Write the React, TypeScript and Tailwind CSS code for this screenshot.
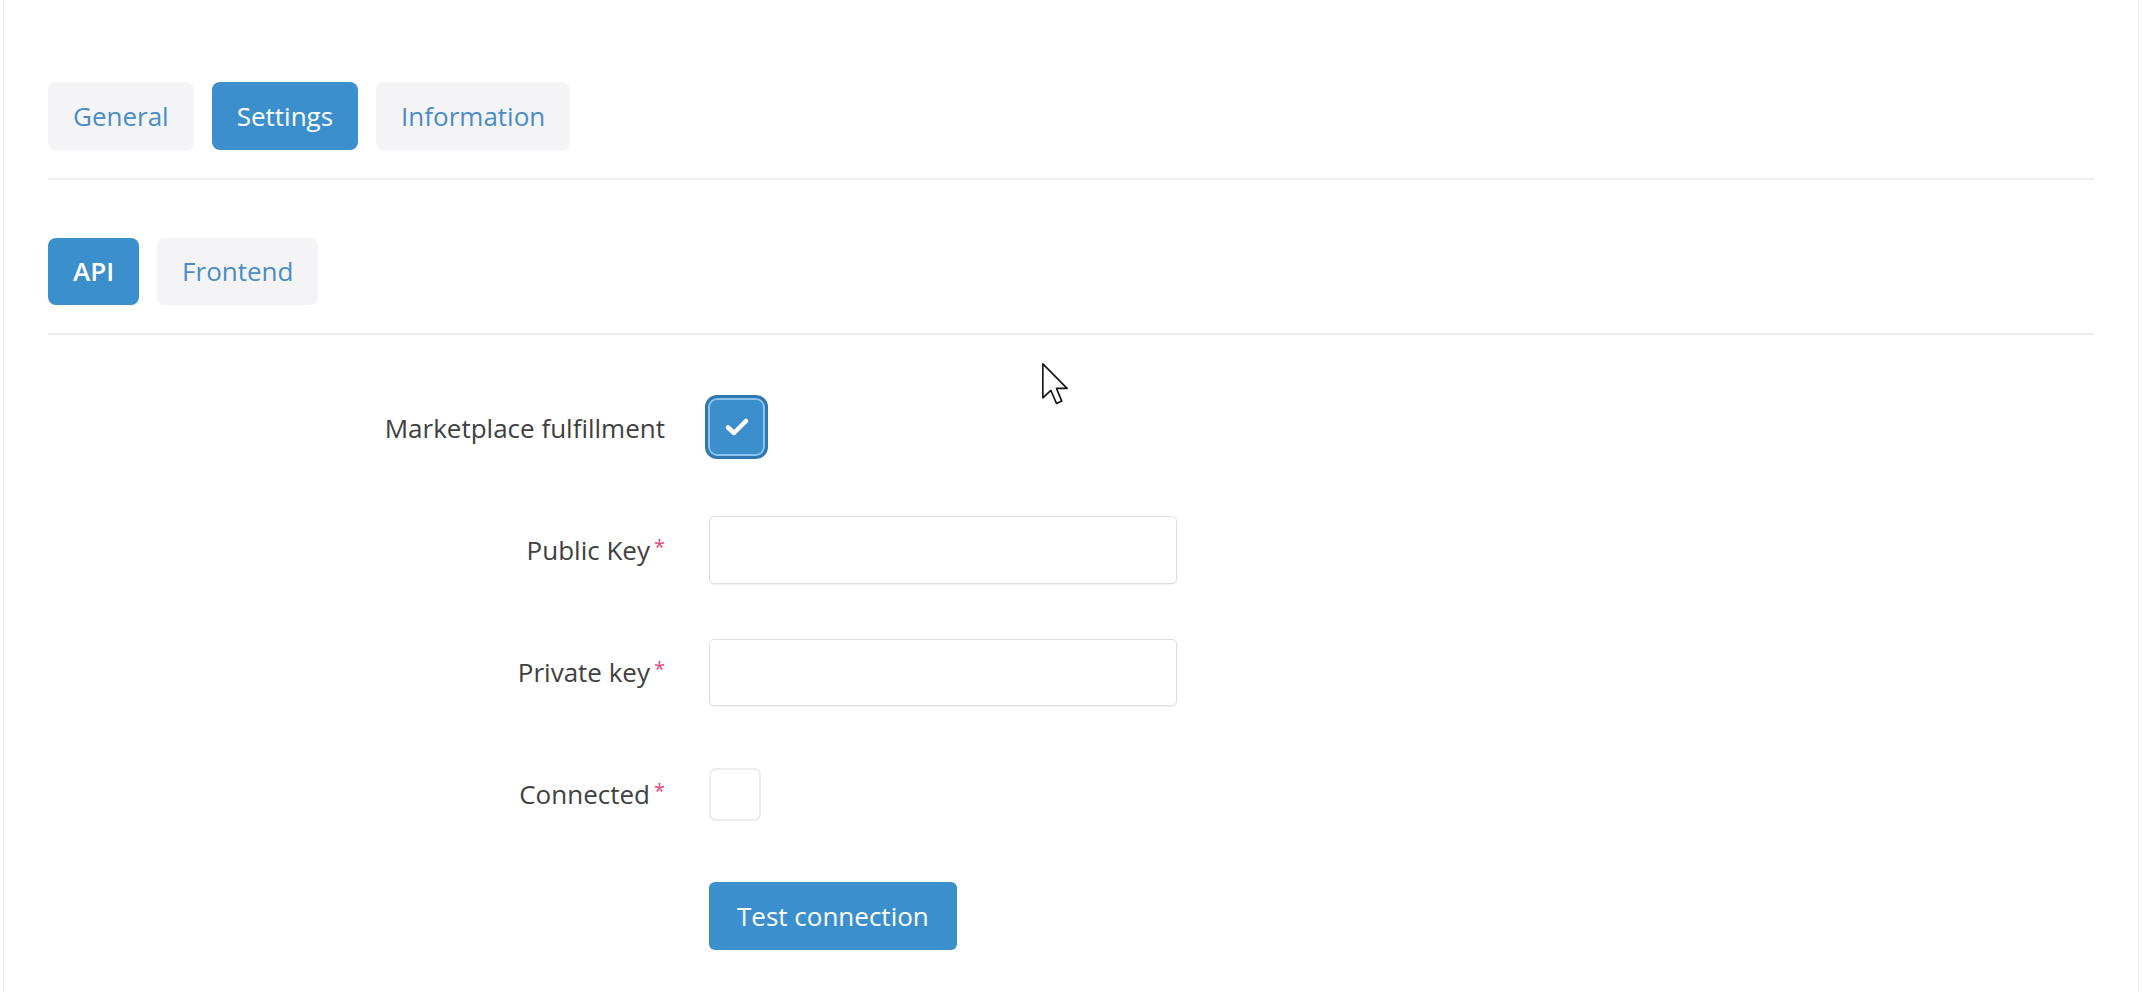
import React from "react";

const FONT = "font-['Open_Sans','Noto_Sans',sans-serif]";

function Tab({ label, active = false }: { label: string; active?: boolean }) {
  return (
    <div
      className={`h-[68px] flex items-center px-[25px] rounded-[8px] text-[26px] ${
        active
          ? "bg-[#3b8fcc] text-white"
          : "bg-[#f4f4f6] text-[#4a8cc6] shadow-[0_1px_3px_rgba(0,0,0,0.03)]"
      }`}
    >
      {label}
    </div>
  );
}

function Label({ text, required = false }: { text: string; required?: boolean }) {
  return (
    <div className="w-[617px] flex justify-end items-center text-[26px] text-[#404040]">
      <span>{text}</span>
      {required && (
        <span className="ml-[4px] self-start mt-[6px] text-[20px] leading-none text-[#e2457d]">
          *
        </span>
      )}
    </div>
  );
}

function Row({ children }: { children: React.ReactNode }) {
  return <div className="flex items-center h-[68px] gap-[44px]">{children}</div>;
}

export default function App() {
  return (
    <div className={`${FONT} relative min-h-[992px] bg-white`}>
      <div className="mx-[3px] min-h-[992px] border-x border-[#ececec] px-[44px] pt-[82px]">
        {/* top tabs */}
        <div className="flex gap-[18px]">
          <Tab label="General" />
          <Tab label="Settings" active />
          <Tab label="Information" />
        </div>
        <div className="mt-[28px] border-t-2 border-[#eeeeee]" />

        {/* sub tabs */}
        <div className="mt-[58px] flex gap-[18px]">
          <div className="h-[67px] flex items-center px-[25px] rounded-[8px] bg-[#3b8fcc] text-white text-[26px] font-semibold">
            API
          </div>
          <div className="h-[67px] flex items-center px-[25px] rounded-[8px] bg-[#f4f4f6] text-[#4a8cc6] text-[26px]">
            Frontend
          </div>
        </div>
        <div className="mt-[28px] border-t-2 border-[#eeeeee]" />

        {/* form */}
        <div className="pt-[59px] flex flex-col gap-[54px]">
          <Row>
            <Label text="Marketplace fulfillment" />
            <div className="-ml-[4px] -mt-[2px] w-[63px] h-[64px] rounded-[12px] bg-[#3b8fcc] border-[3px] border-[#2f78b0] flex items-center justify-center shadow-[inset_0_0_0_2px_#8cc3ec]">
              <svg width="26" height="22" viewBox="0 0 26 22">
                <path
                  d="M4 11.5 L10 17 L22 5"
                  fill="none"
                  stroke="white"
                  strokeWidth="4.5"
                  strokeLinecap="round"
                  strokeLinejoin="round"
                />
              </svg>
            </div>
          </Row>
          <Row>
            <Label text="Public Key" required />
            <input className="w-[468px] h-[68px] rounded-[5px] border border-[#dedede] bg-white shadow-[0_1px_2px_rgba(0,0,0,0.06)] outline-none" />
          </Row>
          <Row>
            <Label text="Private key" required />
            <input className="w-[468px] h-[67px] rounded-[5px] border border-[#dedede] bg-white shadow-[0_1px_2px_rgba(0,0,0,0.06)] outline-none" />
          </Row>
          <Row>
            <Label text="Connected" required />
            <div className="w-[52px] h-[53px] rounded-[7px] border-2 border-[#ececec] bg-white" />
          </Row>
          <Row>
            <div className="w-[617px]" />
            <button className="h-[68px] px-[28px] rounded-[6px] bg-[#3b8fcc] text-white text-[26px]">
              Test connection
            </button>
          </Row>
        </div>
      </div>

      {/* mouse pointer */}
      <svg
        className="absolute left-[1041px] top-[362px]"
        width="30"
        height="44"
        viewBox="0 0 13 19"
      >
        <path
          d="M0.8 0.8 L0.8 15.5 L4.3 12.3 L6.7 17.9 L9 16.9 L6.7 11.4 L11.3 11.4 Z"
          fill="white"
          stroke="#111"
          strokeWidth="0.7"
          strokeLinejoin="round"
        />
      </svg>
    </div>
  );
}
